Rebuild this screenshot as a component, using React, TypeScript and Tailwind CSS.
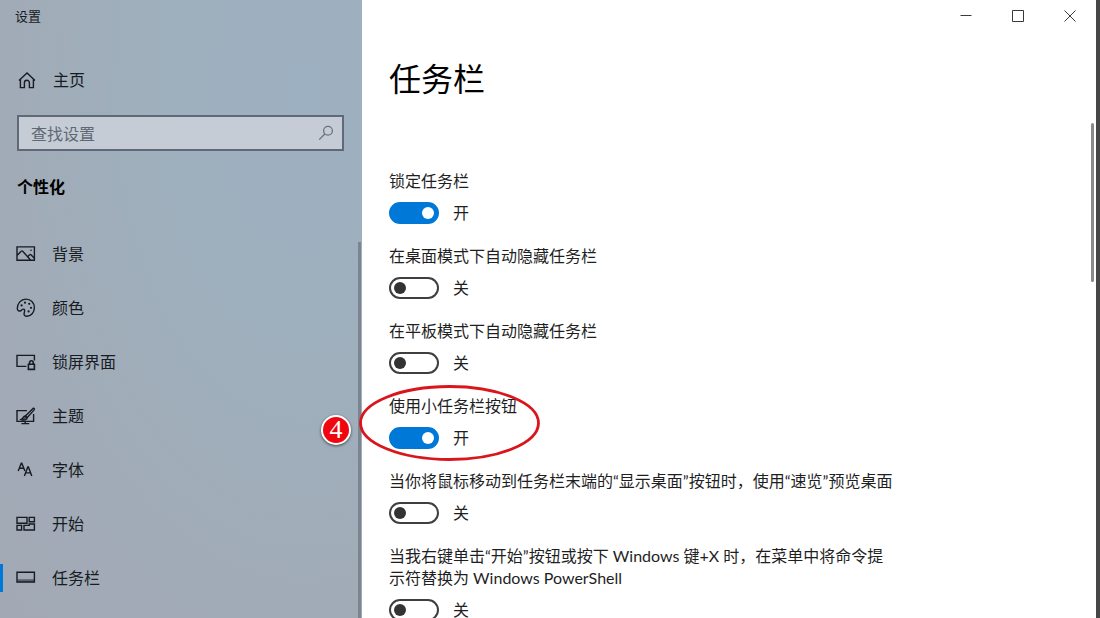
import { useState } from "react";
import type { ReactNode } from "react";

type Setting = { id: string; label: string; on: boolean; marked?: boolean };

const SETTINGS: Setting[] = [
  { id: "lock", label: "锁定任务栏", on: true },
  { id: "hide-desktop", label: "在桌面模式下自动隐藏任务栏", on: false },
  { id: "hide-tablet", label: "在平板模式下自动隐藏任务栏", on: false },
  { id: "small", label: "使用小任务栏按钮", on: true, marked: true },
  { id: "peek", label: "当你将鼠标移动到任务栏末端的“显示桌面”按钮时，使用“速览”预览桌面", on: false },
  {
    id: "powershell",
    label: "当我右键单击“开始”按钮或按下 Windows 键+X 时，在菜单中将命令提示符替换为 Windows PowerShell",
    on: false,
  },
];

function Icon({ children }: { children: ReactNode }) {
  return (
    <svg
      className="size-5 shrink-0"
      viewBox="0 0 20 20"
      fill="none"
      stroke="currentColor"
      strokeWidth="1.4"
      aria-hidden="true"
    >
      {children}
    </svg>
  );
}

const HomeIcon = (
  <Icon>
    <path d="M2 10.400 10 3 18 10.400M3.400 9.200v8.400h4v-4.800a2.400 2.400 0 0 1 5 0v4.800h4V9.200" />
  </Icon>
);
const PictureIcon = (
  <Icon>
    <path d="M1 2.900h17.400v13.400H1zM1 11.400l4.200-4.200c.5-.4 1-.4 1.500 0l8 9" />
    <path d="m11.600 12.700 2.100-1.900c.4-.3.900-.3 1.300 0l3.400 3.400" />
    <circle cx="15" cy="6.200" r=".8" fill="currentColor" stroke="none" />
  </Icon>
);
const PaletteIcon = (
  <Icon>
    <path d="M9.900 1.100c4.800 0 8.500 3.700 8.500 8.500 0 5-3.500 8.700-7.400 8.700-2 0-3.300-1.100-2.900-2.900l.5-2.100c.4-1.800-.9-2.700-2.200-1.800l-1.500 1.100c-1.400 1-3.600.3-3.600-2 0-5.200 3.700-9.500 8.600-9.500z" />
    <g fill="currentColor" stroke="none">
      <circle cx="5.600" cy="7.400" r="1.100" />
      <circle cx="9" cy="4.700" r="1.100" />
      <circle cx="13.200" cy="5.800" r="1.100" />
      <circle cx="15" cy="9.800" r="1.100" />
      <circle cx="12.600" cy="13.400" r="1.100" />
    </g>
  </Icon>
);
const LockScreenIcon = (
  <Icon>
    <path d="M10.400 14.400H1V3.400h17.400v5" />
    <path d="M12.400 12.200h6v5.200h-6zM13.600 12.200v-1.600a1.800 1.800 0 0 1 3.600 0v1.600" strokeWidth="1.600" />
  </Icon>
);
const ThemeIcon = (
  <Icon>
    <path d="M11 4.600H1v10.800h16.600V8M5.400 17.600h7.800M9.200 15.400v2.200" />
    <path d="M17 2.400 9.400 10l1.700 1.700 7-7.800c.8-1-.2-2.200-1.100-1.500z" />
    <path d="M9.400 10c-2.400-.2-2 2.700-4.200 3.500 2.600.9 5.900.6 5.900-1.800z" fill="currentColor" fillOpacity=".6" />
  </Icon>
);
const FontIcon = (
  <Icon>
    <path d="M2.200 11 5.300 3.200h.5L8.900 11M3.400 8.300h4.300" />
    <path d="M8.400 16 11.800 7h.6l3.400 9M9.600 12.900h5" />
  </Icon>
);
const StartIcon = (
  <Icon>
    <path d="M1 3.400h10v5.800H1zM13.200 3.400h5.200v4.400h-5.200zM1 11.400h4.600v4.600H1zM8 11.400h5.200v-1.400h5.200V16H8z" />
  </Icon>
);
const TaskbarIcon = (
  <Icon>
    <path d="M1 4.200h17.400v9.800H1z" />
    <path d="M1.400 11.200h16.600v2.600H1.400z" fill="currentColor" fillOpacity=".5" stroke="none" />
  </Icon>
);

const NAV = [
  { label: "背景", icon: PictureIcon },
  { label: "颜色", icon: PaletteIcon },
  { label: "锁屏界面", icon: LockScreenIcon },
  { label: "主题", icon: ThemeIcon },
  { label: "字体", icon: FontIcon },
  { label: "开始", icon: StartIcon },
  { label: "任务栏", icon: TaskbarIcon, active: true },
];

function Sidebar() {
  return (
    <aside className="relative flex w-[362px] shrink-0 flex-col bg-[radial-gradient(ellipse_at_85%_15%,#9db0c1_0%,#9fafbc_40%,#a1abb7_70%,#a2a9b5_100%)] text-[#171b22]">
      <p className="px-[15px] pt-1.5 text-[13px] leading-5">设置</p>
      <a href="#home" className="mt-11 flex h-5 items-center gap-4 px-[17px]">
        {HomeIcon}
        <span>主页</span>
      </a>
      <div className="relative mr-[18px] ml-[17px] mt-[25px]">
        <input
          type="search"
          aria-label="查找设置"
          placeholder="查找设置"
          className="h-9 w-full border-2 border-[#5f6977] bg-[#c5ccd6] px-3 pr-10 outline-none placeholder:text-[#606873]"
        />
        <svg
          className="absolute top-2.5 right-2.5 size-4 text-[#69727f]"
          viewBox="0 0 16 16"
          fill="none"
          stroke="currentColor"
          strokeWidth="1.3"
          aria-hidden="true"
        >
          <circle cx="10" cy="5.800" r="4.400" />
          <path d="M6.800 9 1.200 14.600" />
        </svg>
      </div>
      <h2 className="mt-6 px-[17px] leading-6 font-bold text-black">个性化</h2>
      <nav className="mt-7 flex flex-col">
        {NAV.map((item) => (
          <a
            key={item.label}
            href={"#" + item.label}
            aria-current={item.active ? "page" : undefined}
            className="flex h-[54px] items-center"
          >
            <span className={item.active ? "h-7 w-[3px] bg-[#0078d7]" : "h-7 w-[3px]"} />
            <span className="flex items-center gap-4 pl-[13px]">
              {item.icon}
              <span>{item.label}</span>
            </span>
          </a>
        ))}
      </nav>
      <span className="absolute top-[242px] right-px bottom-0 w-[3px] bg-[#7b848f]" />
    </aside>
  );
}

function WindowButtons() {
  const button = "flex h-[31px] w-[52px] items-center justify-center";
  return (
    <div className="flex justify-end text-[#3a3a3a]">
      <button type="button" aria-label="最小化" className={button}>
        <svg className="size-3" viewBox="0 0 12 12" stroke="currentColor" aria-hidden="true">
          <path d="M.5 5.500h11" />
        </svg>
      </button>
      <button type="button" aria-label="最大化" className={button}>
        <svg className="size-3" viewBox="0 0 12 12" fill="none" stroke="currentColor" aria-hidden="true">
          <path d="M.5.500h11v11H.5z" />
        </svg>
      </button>
      <button type="button" aria-label="关闭" className={button}>
        <svg className="size-3" viewBox="0 0 12 12" stroke="currentColor" aria-hidden="true">
          <path d="m.5.500 11 11M11.500.500l-11 11" />
        </svg>
      </button>
    </div>
  );
}

function StepMark() {
  return (
    <>
      <svg
        className="pointer-events-none absolute -top-2.5 -left-[30px] h-[76px] w-[181px]"
        viewBox="0 0 181 76"
        fill="none"
        aria-hidden="true"
      >
        <ellipse cx="90.500" cy="38" rx="89" ry="36.500" stroke="#d9161c" strokeWidth="2.800" />
      </svg>
      <span className="absolute top-5 -left-[68px] flex size-[30px] items-center justify-center rounded-full border-2 border-white bg-[#f0060e] font-['Liberation_Serif',serif] text-[26px] leading-none text-white shadow-[0_1px_3px_rgba(0,0,0,0.6)]">
        4
      </span>
    </>
  );
}

function SettingRow({ setting }: { setting: Setting }) {
  const [on, setOn] = useState(setting.on);
  return (
    <div className="relative flex flex-col gap-2.5">
      <label htmlFor={setting.id} className="max-w-[506px] leading-[22px]">
        {setting.label}
      </label>
      <div className="flex h-[22px] items-center gap-3.5">
        <input
          id={setting.id}
          type="checkbox"
          role="switch"
          checked={on}
          onChange={() => setOn(!on)}
          className="flex h-[22px] w-[50px] shrink-0 appearance-none items-center rounded-full border-2 border-[#3f3f3f] bg-white px-[3px] before:size-3 before:rounded-full before:bg-[#333333] checked:justify-end checked:border-[#0078d7] checked:bg-[#0078d7] checked:before:bg-white"
        />
        <span>{on ? "开" : "关"}</span>
      </div>
      {setting.marked && <StepMark />}
    </div>
  );
}

export default function App() {
  return (
    <div className="flex h-screen overflow-hidden border-r-4 border-[#464646] bg-white font-['Lato','Noto_Sans_CJK_SC',sans-serif] text-base text-[#1f1f1f]">
      <Sidebar />
      <main className="relative flex min-w-0 grow flex-col">
        <WindowButtons />
        <h1 className="mt-6 px-[27px] text-[32px] leading-[48px] text-black">任务栏</h1>
        <section className="mt-[67px] flex flex-col gap-[21px] px-[27px]">
          {SETTINGS.map((setting) => (
            <SettingRow key={setting.id} setting={setting} />
          ))}
        </section>
        <span className="absolute top-[123px] right-0.5 h-[159px] w-[3px] rounded-full bg-[#8a8a8a]" />
      </main>
    </div>
  );
}
